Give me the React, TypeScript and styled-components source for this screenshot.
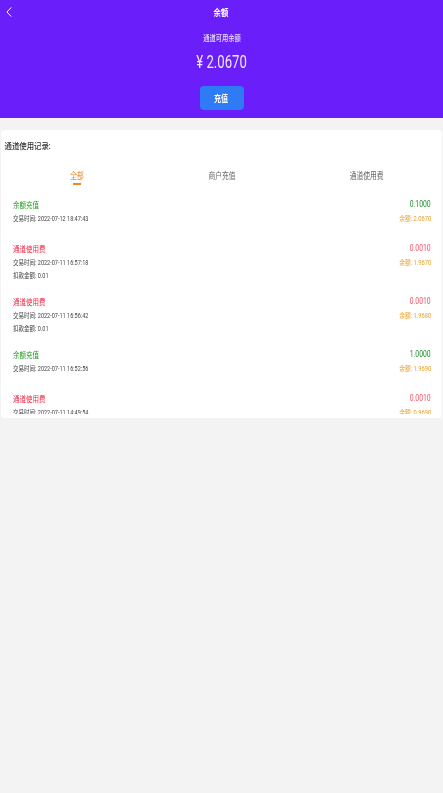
import { useState } from 'react'
import styled, { createGlobalStyle, css } from 'styled-components'

const GlobalStyle = createGlobalStyle`
    * {
        box-sizing: border-box;
    }
    html, body {
        margin: 0;
        padding: 0;
        background: #f3f3f4;
        font-family: Roboto, "Noto Sans CJK SC", sans-serif;
    }
`

// the screenshot is a bit squeezed sideways, so the text is too
const squeezed = (x: number, origin = 'center') => css`
    transform: scaleX(${x});
    transform-origin: ${origin};
`

const Page = styled.div`
    width: 443px;
    height: 793px;
    overflow: hidden;
    background: #f3f3f4;
    filter: blur(0.35px);
`

const Header = styled.header`
    height: 118px;
    background: #6a1efa;
    color: #fff;
    display: flex;
    flex-direction: column;
    align-items: center;
    position: relative;
`

const BackButton = styled.button`
    position: absolute;
    left: 6px;
    top: 7px;
    display: flex;
    padding: 0;
    border: 0;
    background: none;
    color: #fff;
`

const Title = styled.h1`
    margin: 7px 0 0;
    font-size: 9px;
    line-height: 13px;
    font-weight: 700;
    ${squeezed(0.82)}
`

const Subtitle = styled.div`
    margin-top: 13px;
    font-size: 8px;
    line-height: 12px;
    font-weight: 500;
    color: #ece2ff;
    ${squeezed(0.78)}
`

const Balance = styled.div`
    margin-top: 5px;
    padding-left: 1px;
    font-size: 17.5px;
    line-height: 24px;
    color: #efe6ff;
    ${squeezed(0.75)}
`

const RechargeButton = styled.button`
    margin-top: 12px;
    width: 44px;
    height: 24px;
    padding: 0;
    border: 0;
    border-radius: 4px;
    background: #2f7bf5;
    color: #fff;
    font: 700 9px "Noto Sans CJK SC", sans-serif;
`

const ButtonLabel = styled.span`
    display: inline-block;
    ${squeezed(0.78)}
`

const Card = styled.section`
    margin: 12px 1px 0;
    height: 288px;
    background: #fff;
    border-radius: 4px;
`

const CardTitle = styled.h2`
    margin: 0;
    padding: 10px 4px 0;
    font-size: 8.5px;
    line-height: 12px;
    font-weight: 500;
    color: #333;
    ${squeezed(0.87, 'left')}
`

const Tabs = styled.div`
    display: grid;
    grid-template-columns: repeat(3, 145px);
    margin: 18px 0 0 3.5px;
`

const Tab = styled.button<{ $active: boolean }>`
    justify-self: center;
    padding: 0 0 3px;
    border: 0;
    background: none;
    font: 400 9px/12px "Noto Sans CJK SC", sans-serif;
    color: ${({ $active }) => ($active ? '#ee8a1d' : '#666')};
    position: relative;

    &::after {
        content: '';
        display: ${({ $active }) => ($active ? 'block' : 'none')};
        position: absolute;
        left: 50%;
        bottom: 0;
        width: 8px;
        height: 2px;
        margin-left: -4px;
        background: #ee8a1d;
    }
`

const TabLabel = styled.span`
    display: inline-block;
    ${squeezed(0.75)}
`

const List = styled.div`
    height: 215px;
    margin-top: 14px;
    overflow: hidden;
`

const Row = styled.div`
    display: flex;
    justify-content: space-between;
    min-height: 44px;
    padding: 0 11px 13px 12px;
`

const RowInfo = styled.div`
    display: flex;
    flex-direction: column;
`

const RowName = styled.div<{ $income: boolean }>`
    font-size: 8px;
    line-height: 14px;
    color: ${({ $income }) => ($income ? '#1d9a1d' : '#f01f3c')};
    ${squeezed(0.81, 'left')}
`

const Meta = styled.div`
    font-size: 6.5px;
    line-height: 13px;
    color: #444;
    ${squeezed(0.85, 'left')}
`

const RowAmounts = styled.div`
    display: flex;
    flex-direction: column;
    align-items: flex-end;
`

const Amount = styled.div<{ $income: boolean }>`
    margin-top: -1px;
    font-size: 9px;
    line-height: 13px;
    color: ${({ $income }) => ($income ? '#1f8f2e' : '#ef5068')};
    ${squeezed(0.76, 'right')}
`

const Remaining = styled.div`
    margin-top: 2px;
    font-size: 6.5px;
    line-height: 13px;
    color: #ee9c1c;
    ${squeezed(0.88, 'right')}
`

const tabs = ['全部', '商户充值', '通道使用费']

const records = [
    { name: '余额充值', income: true, time: '2022-07-12 18:47:43', amount: '0.1000', left: '2.0670' },
    { name: '通道使用费', income: false, time: '2022-07-11 16:57:18', fee: '0.01', amount: '0.0010', left: '1.9670' },
    { name: '通道使用费', income: false, time: '2022-07-11 16:56:42', fee: '0.01', amount: '0.0010', left: '1.9680' },
    { name: '余额充值', income: true, time: '2022-07-11 16:52:56', amount: '1.0000', left: '1.9690' },
    { name: '通道使用费', income: false, time: '2022-07-11 14:49:54', fee: '0.01', amount: '0.0010', left: '0.9690' },
]

export default function App() {
    const [activeTab, setActiveTab] = useState(0)

    return (
        <Page>
            <GlobalStyle />
            <Header>
                <BackButton aria-label="返回">
                    <svg width="6" height="10" viewBox="0 0 6 10" fill="none">
                        <path d="M5.3.4.9 5l4.4 4.6" stroke="currentColor" strokeWidth="1" />
                    </svg>
                </BackButton>
                <Title>余额</Title>
                <Subtitle>通道可用余额</Subtitle>
                <Balance>¥ 2.0670</Balance>
                <RechargeButton>
                    <ButtonLabel>充值</ButtonLabel>
                </RechargeButton>
            </Header>
            <Card>
                <CardTitle>通道使用记录:</CardTitle>
                <Tabs>
                    {tabs.map((tab, i) => (
                        <Tab key={tab} $active={i === activeTab} onClick={() => setActiveTab(i)}>
                            <TabLabel>{tab}</TabLabel>
                        </Tab>
                    ))}
                </Tabs>
                <List>
                    {records.map((record) => (
                        <Row key={record.time}>
                            <RowInfo>
                                <RowName $income={record.income}>{record.name}</RowName>
                                <Meta>交易时间: {record.time}</Meta>
                                {record.fee && <Meta>扣款金额: {record.fee}</Meta>}
                            </RowInfo>
                            <RowAmounts>
                                <Amount $income={record.income}>{record.amount}</Amount>
                                <Remaining>余额: {record.left}</Remaining>
                            </RowAmounts>
                        </Row>
                    ))}
                </List>
            </Card>
        </Page>
    )
}
